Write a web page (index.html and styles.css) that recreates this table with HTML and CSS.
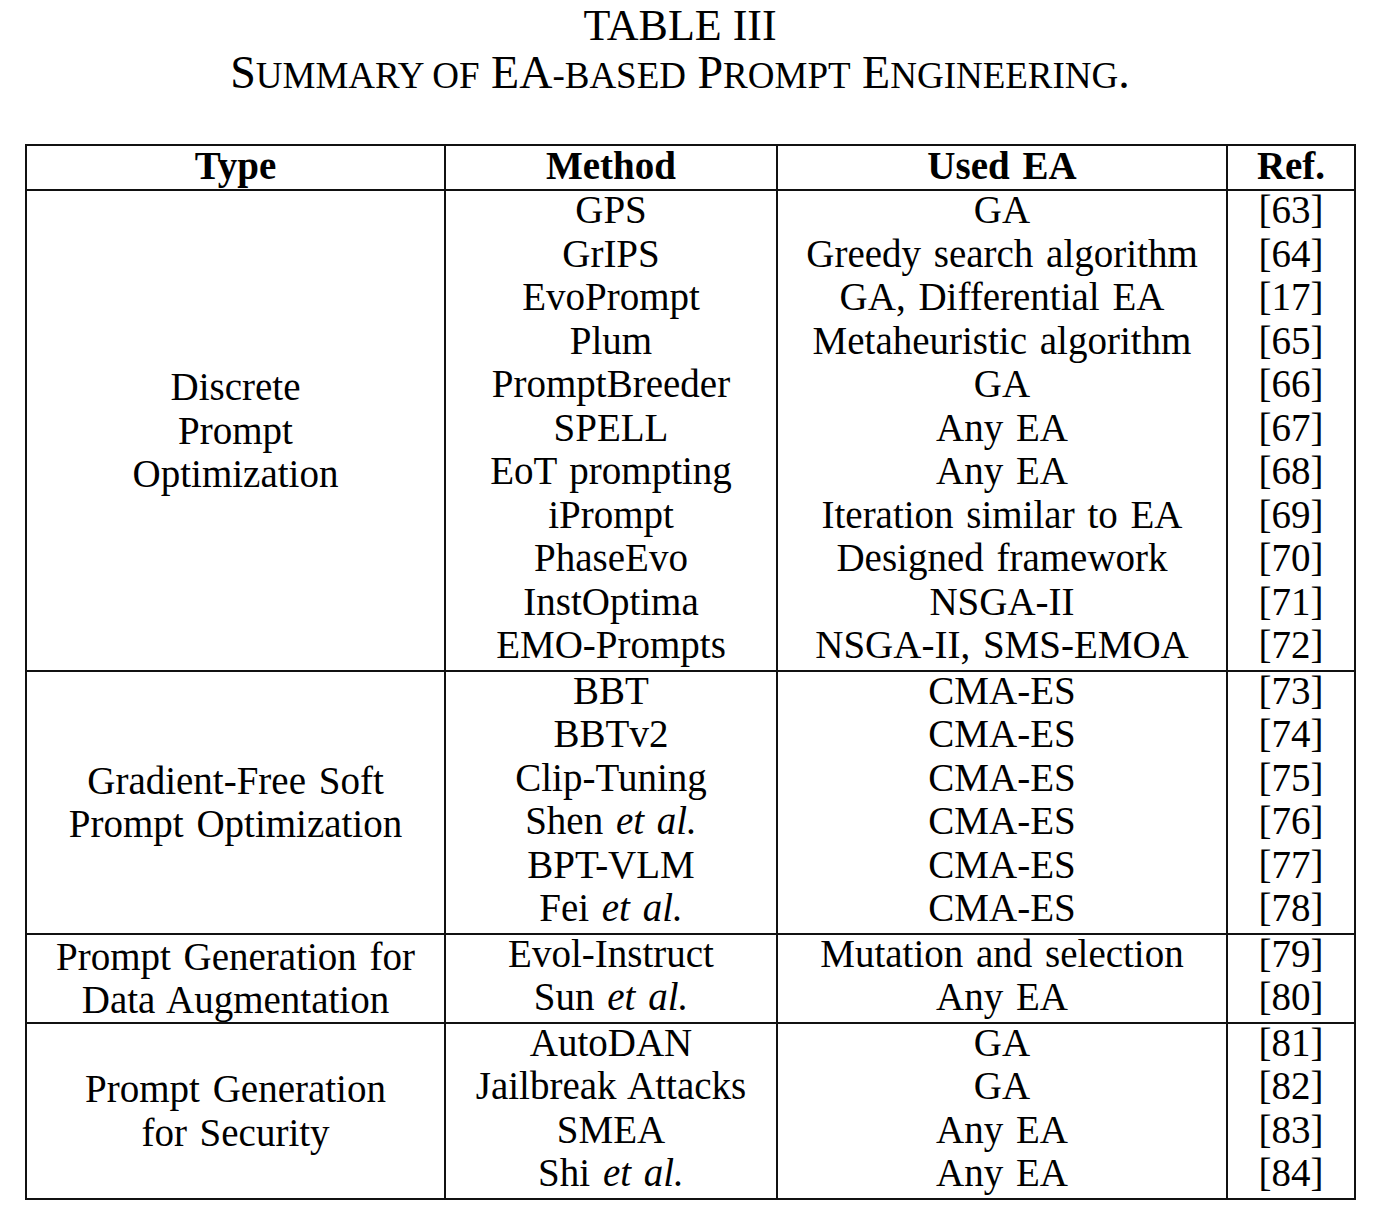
FILE: index.html
```html
<!DOCTYPE html>
<html lang="en">
<head>
<meta charset="utf-8">
<title>Table III</title>
<link rel="stylesheet" href="styles.css">
</head>
<body>
<div class="page">
  <header class="caption">
    <div class="caption-num">TABLE III</div>
    <div class="caption-title">S<span class="sc">ummary of</span> EA<span class="sc">-based</span> P<span class="sc">rompt</span> E<span class="sc">ngineering</span>.</div>
  </header>
  <table class="summary">
    <colgroup>
      <col class="c-type"><col class="c-method"><col class="c-ea"><col class="c-ref">
    </colgroup>
    <thead>
      <tr><th>Type</th><th>Method</th><th>Used EA</th><th>Ref.</th></tr>
    </thead>
    <tbody>
      <tr class="group-start"><td class="type" rowspan="11">Discrete<br>Prompt<br>Optimization</td><td>GPS</td><td>GA</td><td>[63]</td></tr>
      <tr><td>GrIPS</td><td>Greedy search algorithm</td><td>[64]</td></tr>
      <tr><td>EvoPrompt</td><td>GA, Differential EA</td><td>[17]</td></tr>
      <tr><td>Plum</td><td>Metaheuristic algorithm</td><td>[65]</td></tr>
      <tr><td>PromptBreeder</td><td>GA</td><td>[66]</td></tr>
      <tr><td>SPELL</td><td>Any EA</td><td>[67]</td></tr>
      <tr><td>EoT prompting</td><td>Any EA</td><td>[68]</td></tr>
      <tr><td>iPrompt</td><td>Iteration similar to EA</td><td>[69]</td></tr>
      <tr><td>PhaseEvo</td><td>Designed framework</td><td>[70]</td></tr>
      <tr><td>InstOptima</td><td>NSGA-II</td><td>[71]</td></tr>
      <tr><td>EMO-Prompts</td><td>NSGA-II, SMS-EMOA</td><td>[72]</td></tr>

      <tr class="group-start"><td class="type" rowspan="6">Gradient-Free Soft<br>Prompt Optimization</td><td>BBT</td><td>CMA-ES</td><td>[73]</td></tr>
      <tr><td>BBTv2</td><td>CMA-ES</td><td>[74]</td></tr>
      <tr><td>Clip-Tuning</td><td>CMA-ES</td><td>[75]</td></tr>
      <tr><td>Shen <em>et al.</em></td><td>CMA-ES</td><td>[76]</td></tr>
      <tr><td>BPT-VLM</td><td>CMA-ES</td><td>[77]</td></tr>
      <tr><td>Fei <em>et al.</em></td><td>CMA-ES</td><td>[78]</td></tr>

      <tr class="group-start"><td class="type" rowspan="2">Prompt Generation for<br>Data Augmentation</td><td>Evol-Instruct</td><td>Mutation and selection</td><td>[79]</td></tr>
      <tr><td>Sun <em>et al.</em></td><td>Any EA</td><td>[80]</td></tr>

      <tr class="group-start"><td class="type" rowspan="4">Prompt Generation<br>for Security</td><td>AutoDAN</td><td>GA</td><td>[81]</td></tr>
      <tr><td>Jailbreak Attacks</td><td>GA</td><td>[82]</td></tr>
      <tr><td>SMEA</td><td>Any EA</td><td>[83]</td></tr>
      <tr><td>Shi <em>et al.</em></td><td>Any EA</td><td>[84]</td></tr>
    </tbody>
  </table>
</div>
</body>
</html>
```

FILE: styles.css
```css
html, body {
  margin: 0;
  padding: 0;
  background: #ffffff;
}

.page {
  font-family: "Liberation Serif", "Times New Roman", serif;
  color: #000;
  padding-top: 4px;
}

.caption {
  width: 1360px;
  text-align: center;
  margin-bottom: 43px;
}

.caption-num {
  font-size: 44px;
  line-height: 44px;
}

.caption-title {
  font-size: 46px;
  line-height: 50px;
}

.caption-title .sc {
  text-transform: uppercase;
  font-size: 37px;
}

.summary {
  margin-left: 25px;
  border-collapse: collapse;
  font-size: 39px;
  word-spacing: 3px;
  text-align: center;
  border: 2px solid #111;
}

.c-type { width: 419px; }
.c-method { width: 332px; }
.c-ea { width: 450px; }
.c-ref { width: 128px; }

.summary th {
  font-weight: bold;
  height: 39px;
  line-height: 39px;
  padding: 0 0 4px;
  border: 2px solid #111;
}

.summary td {
  padding: 0 0 5px;
  height: 38.5px;
  line-height: 38.5px;
  border-left: 2px solid #111;
  border-right: 2px solid #111;
  white-space: nowrap;
}

.summary td.type {
  vertical-align: middle;
  line-height: 43.5px;
  padding: 0;
}

.summary tr.group-start td {
  border-top: 2px solid #111;
}

.summary em {
  font-style: italic;
}
```
